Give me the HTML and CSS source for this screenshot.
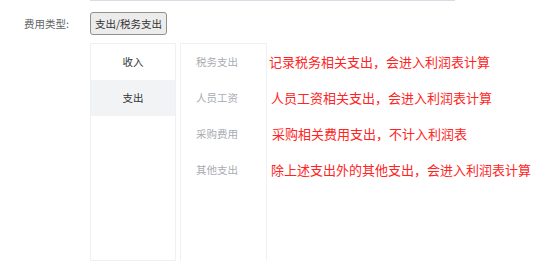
FILE: index.html
```html
<!DOCTYPE html>
<html lang="zh-CN">
<head>
    <meta charset="UTF-8">
    <meta name="viewport" content="width=device-width, initial-scale=1.0">
    <title>费用类型</title>
    <link rel="stylesheet" href="styles.css">
</head>
<body>
    <div class="topline"></div>
    <div class="field">
        <span class="label">费用类型:</span>
        <button class="type-btn">支出/税务支出</button>
    </div>
    <div class="picker">
        <ul class="menu primary">
            <li>收入</li>
            <li class="active">支出</li>
        </ul>
        <ul class="menu secondary">
            <li>税务支出</li>
            <li>人员工资</li>
            <li>采购费用</li>
            <li>其他支出</li>
        </ul>
        <ul class="notes">
            <li>记录税务相关支出，会进入利润表计算</li>
            <li class="shift">人员工资相关支出，会进入利润表计算</li>
            <li class="shift-more">采购相关费用支出，不计入利润表</li>
            <li class="shift">除上述支出外的其他支出，会进入利润表计算</li>
        </ul>
    </div>
</body>
</html>
```

FILE: styles.css
```css
body {
    font-family: 'Noto Sans CJK SC', 'Noto Sans', sans-serif;
    background: #fff;
    color: #333;
    margin: 0;
    width: 554px;
    height: 269px;
    overflow: hidden;
}
.topline {
    margin-left: 90px;
    width: 365px;
    height: 1px;
    background: #d8dce5;
}
.field {
    display: flex;
    align-items: center;
    margin-top: 11px;
    padding-left: 24px;
}
.label {
    width: 66px;
    font-size: 10.5px;
    color: #606266;
}
.type-btn {
    width: 77px;
    height: 23px;
    padding: 0;
    font-family: inherit;
    font-size: 10.5px;
    color: #333;
    background: #ececec;
    border: 1px solid #909090;
    border-radius: 3px;
}
.picker {
    display: flex;
    margin-top: 8px;
    margin-left: 90px;
}
.menu, .notes {
    list-style: none;
    margin: 0;
    padding: 0;
}
.menu {
    height: 216px;
    border: 1px solid #eef0f3;
    font-size: 10.5px;
}
.menu li {
    height: 36px;
    line-height: 36px;
}
.primary {
    width: 84px;
    text-align: center;
    color: #333;
}
.primary .active {
    background: #f2f3f5;
}
.secondary {
    width: 70px;
    margin-left: 4px;
    padding-left: 15px;
    color: #a8abb2;
    border-bottom-color: transparent;
}
.notes {
    padding-left: 2px;
    font-size: 13px;
    color: #ff2424;
}
.notes li {
    height: 36px;
    line-height: 36px;
    white-space: nowrap;
}
.notes li:first-child {
    margin-top: 1px;
}
.notes .shift {
    padding-left: 2px;
}
.notes .shift-more {
    padding-left: 3px;
}
```
